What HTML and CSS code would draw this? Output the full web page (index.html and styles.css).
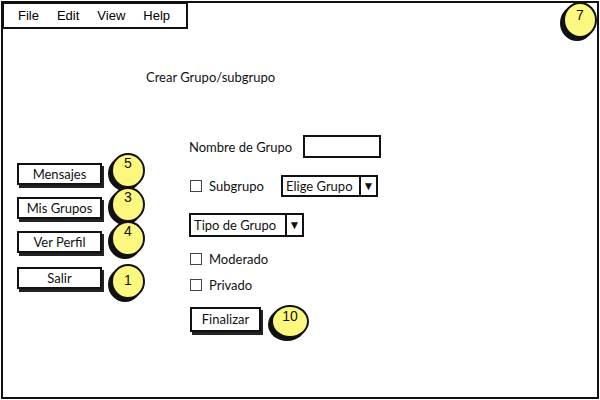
FILE: index.html
```html
<!DOCTYPE html>
<html>
	<head>
		<meta charset="UTF-8">
		<title>Crear Grupo/subgrupo</title>
		<link rel="stylesheet" href="styles.css">
	</head>
	<body>

<div class="frame">
    <!--menu-->
    <div class="menu">
        <span>File</span>
        <span>Edit</span>
        <span>View</span>
        <span>Help</span>
    </div>
    <div class="badge badge-top">7</div>

    <div class="title">Crear Grupo/subgrupo</div>

    <div class="main">
        <!--botones izquierda-->
        <div class="side">
            <div class="item">
                <div class="btn">Mensajes</div>
                <div class="badge">5</div>
            </div>
            <div class="item">
                <div class="btn">Mis Grupos</div>
                <div class="badge">3</div>
            </div>
            <div class="item">
                <div class="btn">Ver Perfil</div>
                <div class="badge">4</div>
            </div>
            <div class="item item-last">
                <div class="btn">Salir</div>
                <div class="badge badge-low">1</div>
            </div>
        </div>

        <!--formulario-->
        <div class="form">
            <div class="row row-name">
                <span class="lb">Nombre de Grupo</span>
                <div class="txt"></div>
            </div>
            <div class="row row-sub">
                <div class="check check-sub"><i class="box"></i>Subgrupo</div>
                <div class="combo combo-sub">
                    <span class="combo-text">Elige Grupo</span>
                    <span class="combo-arrow">▼</span>
                </div>
            </div>
            <div class="row row-type">
                <div class="combo combo-type">
                    <span class="combo-text">Tipo de Grupo</span>
                    <span class="combo-arrow">▼</span>
                </div>
            </div>
            <div class="row row-mod">
                <div class="check"><i class="box"></i>Moderado</div>
            </div>
            <div class="row row-priv">
                <div class="check"><i class="box"></i>Privado</div>
            </div>
            <div class="row row-end">
                <div class="btn btn-end">Finalizar</div>
                <div class="badge badge-end">10</div>
            </div>
        </div>
    </div>
</div>

</body>
</html>
```

FILE: styles.css
```css
* {
    padding: 0;
    margin: 0;
    box-sizing: border-box;
}

body {
    background: #fff;
    font: 13px "Lato", "Open Sans", sans-serif;
    color: #111;
}

.frame {
    position: relative;
    width: 598px;
    height: 398px;
    margin: 1px;
    border: 2px solid #111;
}

.menu {
    position: absolute;
    left: -1px;
    top: -1px;
    width: 186px;
    height: 27px;
    background: #fff;
    border: 2px solid #111;
    display: flex;
    align-items: center;
    gap: 18px;
    padding-left: 14px;
    font: 13px "Liberation Sans", Arial, sans-serif;
    color: #000;
}

.title {
    padding: 66px 0 0 143px;
    line-height: 16px;
}

.main {
    display: flex;
    align-items: flex-start;
    margin-top: 50px;
}

.side {
    width: 172px;
    margin-left: 14px;
    margin-top: 28px;
    display: flex;
    flex-direction: column;
    gap: 12px;
}

.item {
    display: flex;
    align-items: flex-start;
    height: 22px;
}

.item-last {
    margin-top: 2px;
}

.btn {
    width: 85px;
    height: 22px;
    border: 2px solid #111;
    box-shadow: 2px 3px 0 #222;
    background: #fff;
    text-align: center;
    line-height: 18px;
    flex-shrink: 0;
}

.badge {
    width: 34px;
    height: 35px;
    border-radius: 50%;
    background: #fcf77e;
    border: 2px solid #111;
    box-shadow: -3px 3px 0 #111;
    text-align: center;
    font: 14px "Liberation Sans", Arial, sans-serif;
    line-height: 16px;
    padding-top: 0;
    margin-left: 9px;
    margin-top: -10px;
    flex-shrink: 0;
}

.badge-low {
    margin-top: -3px;
    padding-top: 6px;
}

.badge-top {
    position: absolute;
    right: 0;
    top: -1px;
    margin: 0;
    height: 36px;
    padding-top: 3px;
}

.form {
    display: flex;
    flex-direction: column;
}

.row {
    display: flex;
    align-items: center;
}

.lb {
    width: 114px;
}

.txt {
    width: 78px;
    height: 23px;
    border: 2px solid #111;
}

.row-sub {
    margin-top: 17px;
}

.row-type {
    margin-top: 16px;
}

.row-mod {
    margin-top: 14px;
}

.row-priv {
    margin-top: 11px;
}

.row-end {
    margin-top: 15px;
    align-items: flex-start;
}

.check {
    display: flex;
    align-items: center;
    height: 15px;
    padding-left: 1px;
}

.check-sub {
    width: 92px;
}

.box {
    width: 12px;
    height: 12px;
    border: 1px solid #444;
    margin-right: 7px;
}

.combo {
    display: flex;
    height: 22px;
    border: 2px solid #111;
    line-height: 18px;
}

.combo-sub {
    width: 97px;
}

.combo-type {
    width: 115px;
    height: 24px;
    line-height: 20px;
}

.combo-text {
    flex: 1;
    padding-left: 3px;
}

.combo-arrow {
    width: 17px;
    border-left: 2px solid #111;
    font-size: 12px;
    text-align: center;
}

.btn-end {
    width: 71px;
    height: 25px;
    line-height: 21px;
    margin-left: 1px;
}

.badge-end {
    width: 38px;
    height: 33px;
    margin-left: 10px;
    margin-top: -2px;
    padding-top: 1px;
}
```
